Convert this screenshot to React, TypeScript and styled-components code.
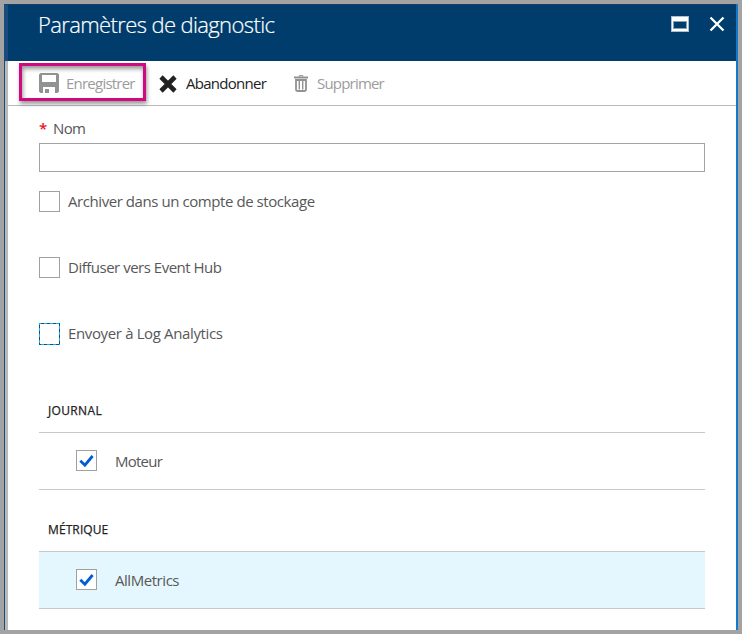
import React from "react";
import styled, { createGlobalStyle } from "styled-components";

const GlobalStyle = createGlobalStyle`
  * { box-sizing: border-box; }
  body { margin: 0; background: #a3a3a3; font-family: "Open Sans", "Noto Sans", sans-serif; }
`;

const Frame = styled.div`
  width: 742px;
  height: 634px;
  padding: 4px;
  background: #a3a3a3;
  overflow: hidden;
`;

const Blade = styled.section`
  display: flex;
  flex-direction: column;
  width: 734px;
  height: 626px;
  background: #fff;
  border-right: 2px solid #1279cb;
`;

const Header = styled.header`
  display: flex;
  justify-content: space-between;
  height: 57px;
  flex: none;
  padding: 0 11px 0 30px;
  background: #003d6d;
  border-top: 1px solid #123f66;
  border-left: 4px solid #174d7c;
`;

const Title = styled.h1`
  margin: 4px 0 0;
  font-size: 22px;
  line-height: 30px;
  font-weight: 300;
  letter-spacing: -0.62px;
  -webkit-text-stroke: 0.2px #fff;
  white-space: nowrap;
  color: #fff;
`;

const WindowActions = styled.div`
  display: flex;
  gap: 20px;
  padding-top: 10px;
`;

const IconButton = styled.button`
  display: block;
  height: 18px;
  padding: 0;
  border: 0;
  background: none;
  svg { display: block; }
`;

const Content = styled.div`
  flex: 1;
  border-left: 1px solid #174d7c;
  background: #fff;
`;

const Inner = styled.div`
  height: 100%;
  border-left: 3px solid #b9b9b9;
`;

const Toolbar = styled.div`
  display: flex;
  align-items: flex-start;
  height: 45px;
  padding-left: 11px;
  border-bottom: 1px solid #bababa;
`;

const Command = styled.button<{ $disabled?: boolean; $gap: number; $spacing: number }>`
  display: flex;
  align-items: center;
  gap: ${(p) => p.$gap}px;
  height: 45px;
  padding: 0;
  border: 0;
  background: none;
  font: 400 15px/20px "Open Sans", "Noto Sans", sans-serif;
  letter-spacing: ${(p) => p.$spacing}px;
  white-space: nowrap;
  color: ${(p) => (p.$disabled ? "#9c9c9c" : "#222")};
  svg { flex: none; }
`;

const CommandText = styled.span`
  margin-top: -2px;
`;

const Highlight = styled.div`
  width: 127px;
  height: 38px;
  flex: none;
  margin: 2px 13px 0 0;
  padding-left: 17px;
  border: 3px solid #cf0a7e;
  box-shadow: 1px 3px 4px rgba(0, 0, 0, 0.4), inset 1px 3px 4px rgba(0, 0, 0, 0.4);
  ${Command} { height: 34px; }
  ${CommandText} { margin-top: 0; }
`;

const DiscardSlot = styled.div`
  width: 135px;
`;

const Form = styled.form`
  padding: 11px 31px 0;
`;

const FieldLabel = styled.label`
  display: flex;
  gap: 7px;
  height: 26px;
  font-size: 15px;
  line-height: 22px;
  letter-spacing: -0.6px;
  color: #555;
`;

const Required = styled.span`
  width: 7px;
  color: #e81123;
  font-weight: 600;
`;

const NameInput = styled.input`
  display: block;
  width: 666px;
  height: 29px;
  border: 1px solid #a3a3a3;
  background: #fff;
  outline: 0;
`;

const Options = styled.div`
  display: flex;
  flex-direction: column;
  gap: 44px;
  padding-top: 19px;
`;

const CheckLabel = styled.label<{ $gap: number; $spacing: number }>`
  display: flex;
  align-items: flex-start;
  gap: ${(p) => p.$gap}px;
  height: 22px;
  font-size: 15px;
  line-height: 20px;
  letter-spacing: ${(p) => p.$spacing}px;
  white-space: nowrap;
  color: #585858;
`;

const Box = styled.span<{ $focused?: boolean }>`
  display: grid;
  place-items: center;
  width: 21px;
  height: ${(p) => (p.$focused ? 22 : 21)}px;
  flex: none;
  border: 1px solid ${(p) => (p.$focused ? "transparent" : "#a0a0a0")};
  background: ${(p) =>
    p.$focused
      ? `linear-gradient(#fff, #fff) padding-box,
         repeating-linear-gradient(135deg, #12b2ee 0 2.1px, #12508a 2.1px 4.2px) border-box`
      : "#fff"};
`;

const GroupTitle = styled.h2<{ $top: number; $spacing: number }>`
  margin: 0;
  padding: ${(p) => p.$top + 1}px 9px 0;
  height: ${(p) => p.$top + 33}px;
  font-size: 12px;
  line-height: 22px;
  font-weight: 500;
  letter-spacing: ${(p) => p.$spacing}px;
  -webkit-text-stroke: 0.25px #222;
  color: #222;
`;

const GroupRow = styled.div<{ $selected?: boolean }>`
  height: 58px;
  padding: 17px 37px 0;
  border-top: 1px solid #c8c8c8;
  border-bottom: 1px solid #c8c8c8;
  background: ${(p) => (p.$selected ? "#e4f7fe" : "#fff")};
  ${CheckLabel} { line-height: 22px; }
`;

const Check = () => (
  <svg width="17" height="17" viewBox="0 0 17 17" fill="none">
    <path d="M2.3 8.8 6.9 13.2 14.6 4" stroke="#015cda" strokeWidth="2.8" />
  </svg>
);

const SaveIcon = () => (
  <svg width="20" height="20" viewBox="0 0 20 20" fill="#929292" fillRule="evenodd">
    <path d="M1.5 0h17L20 1.5v17L18.5 20H16v-6H4v6H1.5L0 18.5v-17zM3 2v7h14V2z" />
    <path d="M6 16h4v4H6z" />
  </svg>
);

const DiscardIcon = () => (
  <svg width="18" height="18" viewBox="0 0 18 18" fill="none">
    <path d="m2 2 14 14M16 2 2 16" stroke="#222" strokeWidth="4.6" />
  </svg>
);

const TrashIcon = () => (
  <svg width="14" height="17" viewBox="0 0 14 17" fill="none" stroke="#929292">
    <path d="M5 1.5V.7h4v.8" />
    <path d="M0 2.5h14" strokeWidth="2" />
    <path d="M2 5v9.2q0 1.8 1.8 1.8h6.4q1.8 0 1.8-1.8V5z" strokeWidth="1.8" />
    <path d="M5.3 5.5v9M8.7 5.5v9" strokeWidth="1.4" />
  </svg>
);

export default function App() {
  return (
    <>
      <GlobalStyle />
      <Frame>
        <Blade>
          <Header>
            <Title>Paramètres de diagnostic</Title>
            <WindowActions>
              <IconButton aria-label="Agrandir" type="button">
                <svg width="18" height="16" viewBox="0 0 18 16" shapeRendering="crispEdges">
                  <path d="M.5.5h17v15H.5z" fill="#fff" stroke="#a9bfd1" />
                  <path d="M2.5 5.5h13v7h-13z" fill="#003d6d" stroke="#84a3bb" />
                </svg>
              </IconButton>
              <IconButton aria-label="Fermer" type="button">
                <svg width="16" height="16" viewBox="0 0 16 16" fill="none">
                  <path d="m1.5 1.5 13 13m0-13-13 13" stroke="#fff" strokeWidth="2.3" />
                </svg>
              </IconButton>
            </WindowActions>
          </Header>
          <Content>
            <Inner>
              <Toolbar>
                <Highlight>
                  <Command type="button" $disabled $gap={7} $spacing={-0.77}>
                    <SaveIcon />
                    <CommandText>Enregistrer</CommandText>
                  </Command>
                </Highlight>
                <DiscardSlot>
                  <Command type="button" $gap={9} $spacing={-0.72}>
                    <DiscardIcon />
                    <CommandText>Abandonner</CommandText>
                  </Command>
                </DiscardSlot>
                <Command type="button" $disabled $gap={9} $spacing={-0.8}>
                  <TrashIcon />
                  <CommandText>Supprimer</CommandText>
                </Command>
              </Toolbar>
              <Form>
                <FieldLabel htmlFor="name">
                  <Required>*</Required>
                  Nom
                </FieldLabel>
                <NameInput id="name" />
                <Options>
                  <CheckLabel $gap={8} $spacing={-0.43}>
                    <Box />
                    Archiver dans un compte de stockage
                  </CheckLabel>
                  <CheckLabel $gap={8} $spacing={-0.49}>
                    <Box />
                    Diffuser vers Event Hub
                  </CheckLabel>
                  <CheckLabel $gap={8} $spacing={-0.36}>
                    <Box $focused />
                    Envoyer à Log Analytics
                  </CheckLabel>
                </Options>
                <section>
                  <GroupTitle $top={54} $spacing={0.35}>JOURNAL</GroupTitle>
                  <GroupRow>
                    <CheckLabel $gap={18} $spacing={-0.75}>
                      <Box><Check /></Box>
                      Moteur
                    </CheckLabel>
                  </GroupRow>
                </section>
                <section>
                  <GroupTitle $top={28} $spacing={0.1}>MÉTRIQUE</GroupTitle>
                  <GroupRow $selected>
                    <CheckLabel $gap={18} $spacing={-0.45}>
                      <Box><Check /></Box>
                      AllMetrics
                    </CheckLabel>
                  </GroupRow>
                </section>
              </Form>
            </Inner>
          </Content>
        </Blade>
      </Frame>
    </>
  );
}
